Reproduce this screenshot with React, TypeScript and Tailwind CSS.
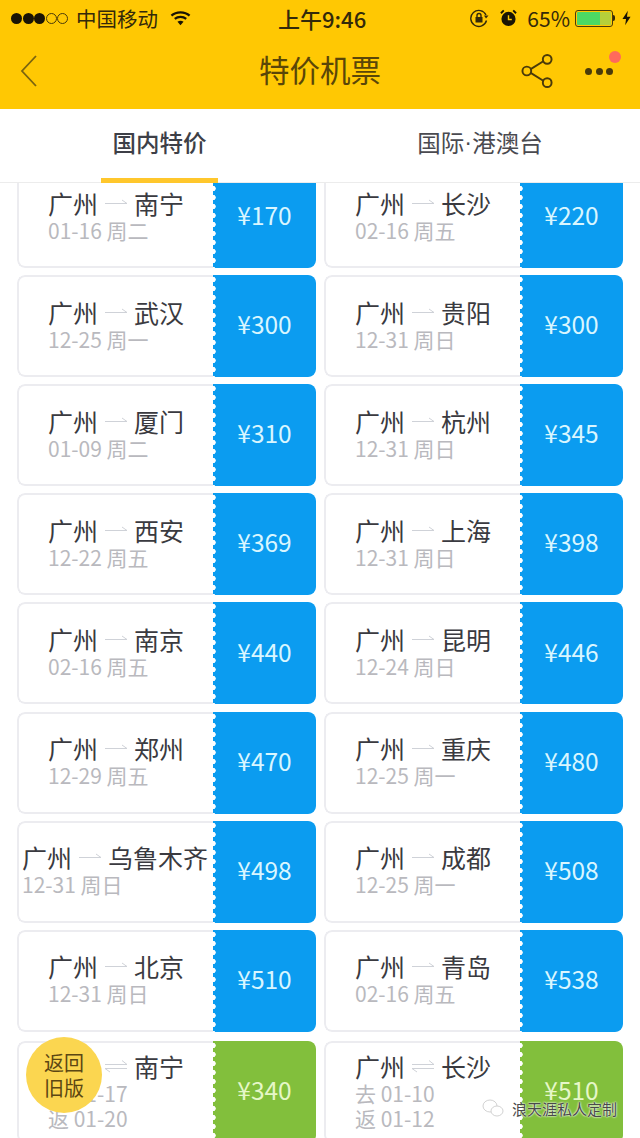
import React from 'react';

interface Ticket {
  from: string;
  to: string;
  date?: string;
  go?: string;
  back?: string;
  price: number;
  nudge?: boolean;
}

const rows: Ticket[][] = [
  [{ from: '广州', to: '南宁', date: '01-16 周二', price: 170 }, { from: '广州', to: '长沙', date: '02-16 周五', price: 220 }],
  [{ from: '广州', to: '武汉', date: '12-25 周一', price: 300 }, { from: '广州', to: '贵阳', date: '12-31 周日', price: 300 }],
  [{ from: '广州', to: '厦门', date: '01-09 周二', price: 310 }, { from: '广州', to: '杭州', date: '12-31 周日', price: 345 }],
  [{ from: '广州', to: '西安', date: '12-22 周五', price: 369 }, { from: '广州', to: '上海', date: '12-31 周日', price: 398 }],
  [{ from: '广州', to: '南京', date: '02-16 周五', price: 440 }, { from: '广州', to: '昆明', date: '12-24 周日', price: 446 }],
  [{ from: '广州', to: '郑州', date: '12-29 周五', price: 470 }, { from: '广州', to: '重庆', date: '12-25 周一', price: 480 }],
  [{ from: '广州', to: '乌鲁木齐', date: '12-31 周日', price: 498, nudge: true }, { from: '广州', to: '成都', date: '12-25 周一', price: 508 }],
  [{ from: '广州', to: '北京', date: '12-31 周日', price: 510 }, { from: '广州', to: '青岛', date: '02-16 周五', price: 538 }],
  [{ from: '广州', to: '南宁', go: '去 01-17', back: '返 01-20', price: 340 }, { from: '广州', to: '长沙', go: '去 01-10', back: '返 01-12', price: 510 }],
];

const Arrow = ({ round }: { round: boolean }) => (
  <svg width="22" height="14" viewBox="0 0 22 14" fill="none" stroke="#cfd2d8" strokeWidth="1" className="shrink-0">
    {round ? (
      <>
        <path d="M0 5.500H22L17 1.500" />
        <path d="M22 9.500H0L5 13" />
      </>
    ) : (
      <path d="M0 7.500H22L17 4" />
    )}
  </svg>
);

const TicketCard = ({ t }: { t: Ticket }) => {
  const round = !t.date;
  return (
    <div className="flex h-[102px] w-[299px] overflow-hidden rounded-[8px]">
      <div className={`flex flex-1 flex-col rounded-l-[8px] border-2 border-r-0 border-[#ececf0] bg-white ${round ? 'justify-start pt-[8px]' : 'justify-center pb-[5px]'} ${t.nudge ? 'pl-[3px]' : 'pl-[29px]'}`}>
        <div className="flex h-[30px] items-center gap-[7px] text-[25px] leading-[30px] text-[#3a3a40]">
          <span>{t.from}</span>
          <Arrow round={round} />
          <span>{t.to}</span>
        </div>
        {round ? (
          <div className="text-[21px] leading-[25px] text-[#b9b9be]">
            <div>{t.go}</div>
            <div>{t.back}</div>
          </div>
        ) : (
          <div className="text-[21px] leading-[24px] text-[#b9b9be]">{t.date}</div>
        )}
      </div>
      <div className={`relative flex w-[103px] items-center justify-center rounded-r-[6px] pb-[3px] text-[24.5px] ${round ? 'bg-[#82bf3c] text-[#e6f7c8]' : 'bg-[#0b9cf0] text-[#d9f6ff]'}`}>
        <div className="absolute inset-y-0 left-0 w-[4px] bg-[radial-gradient(circle_at_0_50%,#ffffff_2.4px,transparent_3px)] bg-[length:4px_9px]" />
        ¥{t.price}
      </div>
    </div>
  );
};

export default function App() {
  return (
    <div className="relative flex h-[1138px] w-[640px] flex-col overflow-hidden bg-white font-['Noto_Sans_CJK_SC','Liberation_Sans',sans-serif]">
      {/* status bar + nav */}
      <div className="h-[109px] shrink-0 bg-[#ffc803] text-[#4a3a0a]">
        <div className="flex h-[36px] items-center pl-[11px] pr-[9px]">
          <div className="flex w-[267px] items-center text-[20.5px] text-[#33290a]">
            <span className="flex gap-[0.5px]">
              {[0, 1, 2].map(i => <span key={i} className="h-[11px] w-[11px] rounded-full bg-[#1a1405]" />)}
              {[0, 1].map(i => <span key={i} className="h-[11px] w-[11px] rounded-full border border-[#4a3a0a]" />)}
            </span>
            <span className="ml-[8px] leading-none">中国移动</span>
            <svg width="21" height="16" viewBox="0 0 22 16" className="ml-[12px]" fill="none" stroke="#1a1405" strokeWidth="2.400">
              <path d="M1.500 5.500C6.500 1 15.500 1 20.500 5.500" />
              <path d="M5 9C8.500 6.200 13.500 6.200 17 9" />
              <path d="M11 15.500L7.800 12C9.700 10.600 12.300 10.600 14.200 12Z" fill="#1a1405" stroke="none" />
            </svg>
          </div>
          <div className="whitespace-nowrap text-[22px] font-medium leading-none text-[#33290a]">上午9:46</div>
          <div className="flex flex-1 items-center justify-end text-[#33290a]">
            <svg width="20" height="20" viewBox="0 0 20 20" fill="none" stroke="#33290a" strokeWidth="1.400">
              <path d="M17 7A8 8 0 1 0 17.500 12.500" />
              <path d="M15 7.500L19.500 7.500L17 10.500Z" fill="#33290a" stroke="none" />
              <rect x="6.500" y="9" width="7" height="5.500" fill="#33290a" stroke="none" />
              <path d="M8 9V7.500A2 2 0 0 1 12 7.500V9" />
            </svg>
            <svg width="17" height="18" viewBox="0 0 18 18" className="ml-[11px]">
              <circle cx="9" cy="10" r="7.500" fill="#1a1405" />
              <path d="M9 6V10.500H12.500" stroke="#ffc803" strokeWidth="1.500" fill="none" />
              <path d="M1 4L4 1M17 4L14 1" stroke="#1a1405" strokeWidth="2" />
            </svg>
            <span className="ml-[10px] text-[21px] leading-none">65%</span>
            <span className="ml-[5px] flex h-[17px] w-[38px] rounded-[3px] border border-[#4a3a0a] p-[1px]">
              <span className="h-full w-[23px] rounded-l-[1px] bg-[#4cd964]" />
              <span className="h-full w-[11px] bg-[#b6cf3a]" />
            </span>
            <span className="h-[6px] w-[2px] rounded-r-[2px] bg-[#33290a]" />
            <svg width="9" height="16" viewBox="0 0 10 16" className="ml-[7px]">
              <path d="M6.500 0L0.500 9H4.500L3.500 16L9.500 6.500H5.500Z" fill="#1a1405" />
            </svg>
          </div>
        </div>
        <div className="relative flex h-[73px] items-center justify-center">
          <svg width="18" height="32" viewBox="0 0 18 32" className="absolute left-[20px] top-[19px]" fill="none" stroke="#7a6410" strokeWidth="1.800">
            <path d="M16 1L2 16L16 31" />
          </svg>
          <span className="-mt-[6px] text-[30.500px] leading-none text-[#5a4608]">特价机票</span>
          <svg width="33" height="36" viewBox="0 0 34 36" className="absolute left-[521px] top-[17px]" fill="none" stroke="#4a3a0a" strokeWidth="2">
            <circle cx="27" cy="6" r="4.500" />
            <circle cx="6" cy="18" r="4.500" />
            <circle cx="27" cy="30" r="4.500" />
            <path d="M10 16L23 8M10 20L23 28" />
          </svg>
          <div className="absolute left-[585px] top-[32px] flex gap-[3.500px]">
            {[0, 1, 2].map(i => <span key={i} className="h-[7px] w-[7px] rounded-full bg-[#4a3a0a]" />)}
          </div>
          <span className="absolute left-[609px] top-[15px] h-[12px] w-[12px] rounded-full bg-[#ff6a5c]" />
        </div>
      </div>

      {/* tabs */}
      <div className="flex h-[74px] shrink-0 border-b border-[#ececec] bg-white">
        <div className="relative flex w-[320px] items-center justify-center pb-[5px] text-[23.500px] font-medium text-[#3d3f47]">
          <span className="-ml-[1px]">国内特价</span>
          <span className="absolute bottom-[-1px] left-[101px] h-[5px] w-[117px] bg-[#ffc72c]" />
        </div>
        <div className="flex w-[320px] items-center justify-center pb-[5px] text-[23.500px] text-[#4a4a50]">
          国际<span className="font-['Liberation_Sans',sans-serif]">·</span>港澳台
        </div>
      </div>

      {/* ticket list */}
      <div className="min-h-0 flex-1 overflow-hidden">
        <div className="-mt-[17px] flex flex-col gap-[7.120px] pl-[17px]">
          {rows.map((row, i) => (
            <div key={i} className="flex gap-[8px] last:mt-[2px]">
              {row.map((t, j) => <TicketCard key={j} t={t} />)}
            </div>
          ))}
        </div>
      </div>

      {/* floating back-to-old-version button */}
      <div className="absolute left-[26px] top-[1037px] flex h-[76px] w-[76px] items-center justify-center rounded-full bg-[#fbd650] text-center text-[20px] leading-[25px] text-[#5c4713]">
        返回<br />旧版
      </div>

      {/* watermark */}
      <div className="absolute left-[482px] top-[1098px] flex items-center gap-[8px] text-[15px] leading-none text-[#4a4a4a] [text-shadow:0_0_2px_#fff,0_0_2px_#fff]">
        <svg width="22" height="20" viewBox="0 0 22 20" fill="#fff" stroke="#c6c6c6" strokeWidth="0.800">
          <ellipse cx="8" cy="8" rx="7" ry="6" />
          <ellipse cx="15" cy="13" rx="6" ry="5" />
        </svg>
        <span>浪天涯私人定制</span>
      </div>
    </div>
  );
}
